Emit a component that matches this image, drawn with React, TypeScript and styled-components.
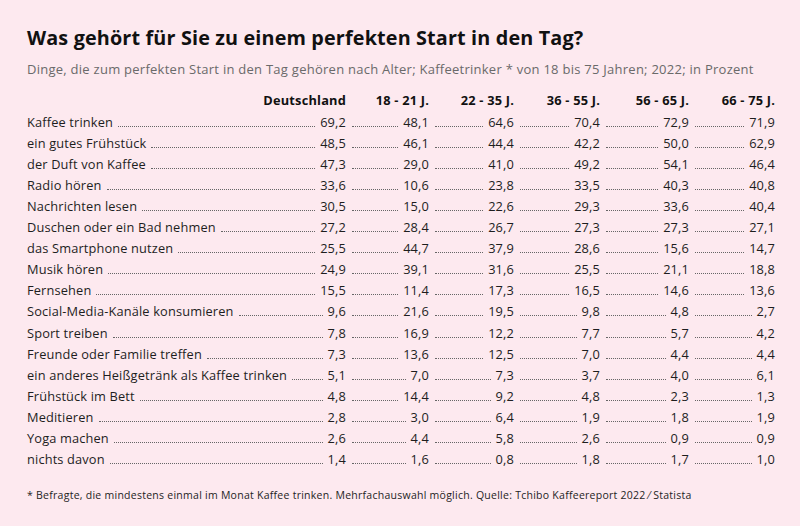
import React from 'react';
import styled, { createGlobalStyle } from "styled-components";

const GlobalStyles = createGlobalStyle`
  html, body {
    margin: 0;
    padding: 0;
    background: #fde9ef;
  }
  body {
    font-family: "Open Sans", "Liberation Sans", sans-serif;
    color: #1e1e1e;
  }
`;

const columns = ["Deutschland", "18 - 21 J.", "22 - 35 J.", "36 - 55 J.", "56 - 65 J.", "66 - 75 J."];

const rows: [string, string[]][] = [
  ["Kaffee trinken", ["69,2", "48,1", "64,6", "70,4", "72,9", "71,9"]],
  ["ein gutes Frühstück", ["48,5", "46,1", "44,4", "42,2", "50,0", "62,9"]],
  ["der Duft von Kaffee", ["47,3", "29,0", "41,0", "49,2", "54,1", "46,4"]],
  ["Radio hören", ["33,6", "10,6", "23,8", "33,5", "40,3", "40,8"]],
  ["Nachrichten lesen", ["30,5", "15,0", "22,6", "29,3", "33,6", "40,4"]],
  ["Duschen oder ein Bad nehmen", ["27,2", "28,4", "26,7", "27,3", "27,3", "27,1"]],
  ["das Smartphone nutzen", ["25,5", "44,7", "37,9", "28,6", "15,6", "14,7"]],
  ["Musik hören", ["24,9", "39,1", "31,6", "25,5", "21,1", "18,8"]],
  ["Fernsehen", ["15,5", "11,4", "17,3", "16,5", "14,6", "13,6"]],
  ["Social-Media-Kanäle konsumieren", ["9,6", "21,6", "19,5", "9,8", "4,8", "2,7"]],
  ["Sport treiben", ["7,8", "16,9", "12,2", "7,7", "5,7", "4,2"]],
  ["Freunde oder Familie treffen", ["7,3", "13,6", "12,5", "7,0", "4,4", "4,4"]],
  ["ein anderes Heißgetränk als Kaffee trinken", ["5,1", "7,0", "7,3", "3,7", "4,0", "6,1"]],
  ["Frühstück im Bett", ["4,8", "14,4", "9,2", "4,8", "2,3", "1,3"]],
  ["Meditieren", ["2,8", "3,0", "6,4", "1,9", "1,8", "1,9"]],
  ["Yoga machen", ["2,6", "4,4", "5,8", "2,6", "0,9", "0,9"]],
  ["nichts davon", ["1,4", "1,6", "0,8", "1,8", "1,7", "1,0"]],
];

const App = () => {
  return (
    <Page>
      <GlobalStyles />
      <Title>Was gehört für Sie zu einem perfekten Start in den Tag?</Title>
      <Subtitle>
        Dinge, die zum perfekten Start in den Tag gehören nach Alter; Kaffeetrinker * von 18 bis 75 Jahren; 2022; in Prozent
      </Subtitle>

      <Table>
        {columns.map((c) => (
          <HeadCell key={c}>{c}</HeadCell>
        ))}

        {rows.map(([label, values]) => (
          <React.Fragment key={label}>
            <Cell>
              <Label>{label}</Label>
              <Leader />
              <Value>{values[0]}</Value>
            </Cell>
            {values.slice(1).map((v, i) => (
              <Cell key={i} $pad>
                <Leader />
                <Value>{v}</Value>
              </Cell>
            ))}
          </React.Fragment>
        ))}
      </Table>

      <Footnote>
        * Befragte, die mindestens einmal im Monat Kaffee trinken. Mehrfachauswahl möglich. Quelle: Tchibo Kaffeereport 2022 ⁄ Statista
      </Footnote>
    </Page>
  );
}

export default App;

const Page = styled.div`
  width: 800px;
  height: 526px;
  box-sizing: border-box;
  padding: 25px 25px 0 27px;
  display: flex;
  flex-direction: column;
  background: #fde9ef;
  overflow: hidden;
`;

const Title = styled.h1`
  margin: 0;
  font-size: 19.8px;
  font-weight: 700;
  line-height: 26px;
  color: #111;
  letter-spacing: 0.15px;
`;

const Subtitle = styled.div`
  margin-top: 10px;
  font-size: 13px;
  line-height: 17px;
  color: #6a6a6a;
  letter-spacing: 0.26px;
`;

const Table = styled.div`
  margin-top: 11px;
  display: grid;
  grid-template-columns: 319px 83px 85px 86px 89px 86px;
  grid-auto-rows: 21.05px;
  font-size: 12.8px;
`;

const HeadCell = styled.div`
  display: flex;
  align-items: center;
  justify-content: flex-end;
  font-weight: 700;
  color: #111;
  letter-spacing: 0.2px;
  white-space: pre;
`;

const Cell = styled.div<{ $pad?: boolean }>`
  display: flex;
  align-items: baseline;
  padding-left: ${(p) => (p.$pad ? "6px" : "0")};
  padding-top: 3px;
  letter-spacing: 0.15px;
`;

const Label = styled.span`
  white-space: nowrap;
  margin-right: 5px;
`;

const Leader = styled.span`
  flex: 1;
  height: 0;
  border-bottom: 1px dotted #666;
  margin-right: 5px;
`;

const Value = styled.span`
  white-space: nowrap;
`;

const Footnote = styled.div`
  margin-top: 20px;
  font-size: 10.5px;
  line-height: 14px;
  color: #1e1e1e;
  letter-spacing: 0.26px;
`;
